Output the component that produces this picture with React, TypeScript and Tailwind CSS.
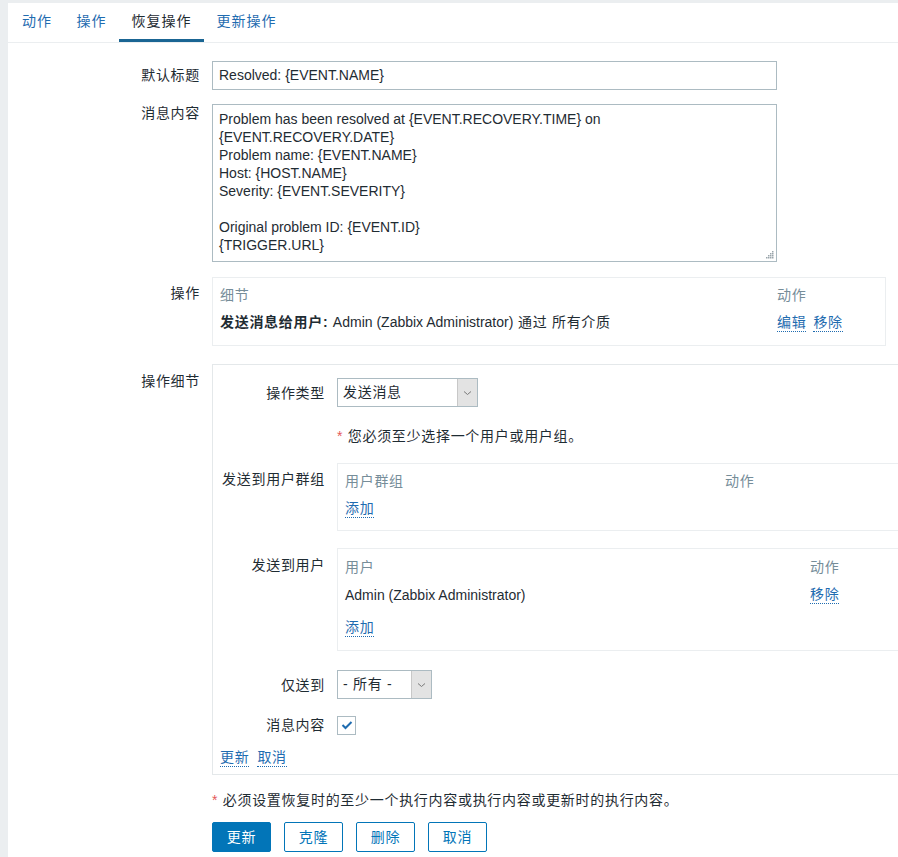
import React from "react";

const font = "font-['Liberation_Sans','Noto_Sans_CJK_SC',sans-serif]";

function Link({ children }: { children: React.ReactNode }) {
  return (
    <span className="text-[#1f6cb0] border-b border-dotted border-[#1f6cb0] leading-[17px] cursor-pointer">
      {children}
    </span>
  );
}

function Select({ value, width }: { value: React.ReactNode; width: string }) {
  return (
    <div className={`flex h-[29px] border border-[#acbbc2] bg-white ${width}`}>
      <div className="flex-1 px-[5px] flex items-center text-[#1f2c33]">{value}</div>
      <div className="w-[20px] bg-[#e3e3e3] border-l border-[#c8c8c8] flex items-center justify-center">
        <svg width="9" height="6" viewBox="0 0 9 6">
          <path d="M1 1.5 L4.5 4.5 L8 1.5" fill="none" stroke="#7a7a7a" strokeWidth="1" />
        </svg>
      </div>
    </div>
  );
}

function Row({ label, children, className = "" }: { label: string; children: React.ReactNode; className?: string }) {
  return (
    <div className={`flex ${className}`}>
      <div className="w-[204px] shrink-0 pr-[12px] text-right text-[#1f2c33]">{label}</div>
      <div className="flex-1 min-w-0">{children}</div>
    </div>
  );
}

function SubRow({ label, children, className = "" }: { label: string; children: React.ReactNode; className?: string }) {
  return (
    <div className={`flex ${className}`}>
      <div className="w-[124px] shrink-0 pr-[12px] text-right text-[#1f2c33] leading-[20px]">{label}</div>
      <div className="flex-1 min-w-0">{children}</div>
    </div>
  );
}

const tabs = [
  { t: "动作", w: "w-[54px]" },
  { t: "操作", w: "w-[55px]" },
  { t: "恢复操作", w: "w-[85px]" },
  { t: "更新操作", w: "w-[85px]" },
];

export default function App() {
  const message = [
    "Problem has been resolved at {EVENT.RECOVERY.TIME} on",
    "{EVENT.RECOVERY.DATE}",
    "Problem name: {EVENT.NAME}",
    "Host: {HOST.NAME}",
    "Severity: {EVENT.SEVERITY}",
    "",
    "Original problem ID: {EVENT.ID}",
    "{TRIGGER.URL}",
  ];

  return (
    <div className={`w-[898px] h-[857px] overflow-hidden bg-[#ebeef0] pl-[8px] pt-[3px] text-[14px] tracking-[0.7px] ${font}`}>
      <div className="bg-white h-full">
        {/* Tabs */}
        <div className="flex h-[40px] border-b border-[#ebeef0] pl-[2px]">
          {tabs.map(({ t, w }) => (
            <div
              key={t}
              className={`${w} flex items-center justify-center tracking-[1px] border-b-[3px] ${
                t === "恢复操作" ? "border-[#1a6593] text-[#1f2c33]" : "border-transparent text-[#1f6cb0]"
              }`}
            >
              {t}
            </div>
          ))}
        </div>

        {/* Form */}
        <div className="pt-[18px]">
          <Row label="默认标题" className="items-center">
            <div className="w-[565px] h-[29px] border border-[#acbbc2] px-[6px] flex items-center text-[#1f2c33] tracking-normal">
              Resolved: {"{EVENT.NAME}"}
            </div>
          </Row>

          <Row label="消息内容" className="mt-[14px] leading-[18px]">
            <div className="relative w-[565px] h-[158px] border border-[#acbbc2] px-[6px] pt-[5px] text-[#1f2c33] leading-[18px] tracking-normal">
              {message.map((l, i) => (
                <div key={i} className="h-[18px]">
                  {l}
                </div>
              ))}
              <svg className="absolute right-[2px] bottom-[2px]" width="10" height="10" viewBox="0 0 10 10">
                {[
                  [8, 2],
                  [6, 4],
                  [8, 4],
                  [4, 6],
                  [6, 6],
                  [8, 6],
                  [2, 8],
                  [4, 8],
                  [6, 8],
                  [8, 8],
                ].map(([x, y], i) => (
                  <rect key={i} x={x} y={y} width="1.5" height="1.5" fill="#9aa5ab" />
                ))}
              </svg>
            </div>
          </Row>

          <Row label="操作" className="mt-[15px] pt-[6px]">
            <div className="-mt-[6px] w-[674px] border border-[#ebeef0] px-[7px] pt-[4px] pb-[9px]">
              <div className="grid grid-cols-[1fr_101px] h-[27px] items-center text-[#768d99]">
                <div>细节</div>
                <div>动作</div>
              </div>
              <div className="grid grid-cols-[1fr_101px] h-[27px] items-center text-[#1f2c33]">
                <div>
                  <b>发送消息给用户:</b> <span className="tracking-normal">Admin (Zabbix Administrator)</span> 通过 所有介质
                </div>
                <div className="flex gap-[7px]">
                  <Link>编辑</Link>
                  <Link>移除</Link>
                </div>
              </div>
            </div>
          </Row>

          <Row label="操作细节" className="mt-[18px] pt-[7px]">
            <div className="-mt-[7px] w-[800px] border-t border-l border-b border-[#e4e8ea] pt-[13px] pb-[7px]">
              <SubRow label="操作类型" className="items-center">
                <Select value="发送消息" width="w-[141px]" />
              </SubRow>

              <SubRow label="" className="mt-[20px] leading-[18px]">
                <div className="text-[#1f2c33]">
                  <span className="text-[#e45959]">*</span> 您必须至少选择一个用户或用户组。
                </div>
              </SubRow>

              <SubRow label="发送到用户群组" className="mt-[18px] pt-[6px]">
                <div className="-mt-[6px] w-[600px] border border-[#ebeef0] px-[7px] pt-[3px] pb-[7px]">
                  <div className="flex h-[28px] items-center text-[#768d99]">
                    <div className="w-[380px]">用户群组</div>
                    <div>动作</div>
                  </div>
                  <div className="flex h-[28px] items-center">
                    <Link>添加</Link>
                  </div>
                </div>
              </SubRow>

              <SubRow label="发送到用户" className="mt-[17px] pt-[7px]">
                <div className="-mt-[7px] w-[600px] border border-[#ebeef0] px-[7px] pt-[4px] pb-[8px]">
                  <div className="flex h-[28px] items-center text-[#768d99]">
                    <div className="w-[465px]">用户</div>
                    <div>动作</div>
                  </div>
                  <div className="flex h-[28px] items-center text-[#1f2c33]">
                    <div className="w-[465px] tracking-normal">Admin (Zabbix Administrator)</div>
                    <Link>移除</Link>
                  </div>
                  <div className="flex h-[28px] items-center mt-[5px]">
                    <Link>添加</Link>
                  </div>
                </div>
              </SubRow>

              <SubRow label="仅送到" className="mt-[19px] items-center">
                <Select value="- 所有 -" width="w-[95px]" />
              </SubRow>

              <SubRow label="消息内容" className="mt-[16px] items-center">
                <div className="w-[19px] h-[19px] border border-[#acbbc2] flex items-center justify-center bg-white">
                  <svg width="12" height="10" viewBox="0 0 12 10">
                    <path d="M1.5 5 L4.5 8 L10.5 2" fill="none" stroke="#1f6cb0" strokeWidth="2" />
                  </svg>
                </div>
              </SubRow>

              <div className="mt-[14px] pl-[7px] flex gap-[8px] h-[18px] items-center">
                <Link>更新</Link>
                <Link>取消</Link>
              </div>
            </div>
          </Row>

          <div className="pl-[204px] mt-[16px] text-[#1f2c33] leading-[18px]">
            <span className="text-[#e45959]">*</span> 必须设置恢复时的至少一个执行内容或执行内容或更新时的执行内容。
          </div>

          <div className="pl-[204px] mt-[13px] flex gap-[13px]">
            <button className="w-[59px] h-[30px] bg-[#0275b8] border border-[#0275b8] text-white rounded-[2px]">更新</button>
            {["克隆", "删除", "取消"].map((b) => (
              <button key={b} className="w-[59px] h-[30px] bg-white border border-[#0275b8] text-[#0275b8] rounded-[2px]">
                {b}
              </button>
            ))}
          </div>
        </div>
      </div>
    </div>
  );
}
